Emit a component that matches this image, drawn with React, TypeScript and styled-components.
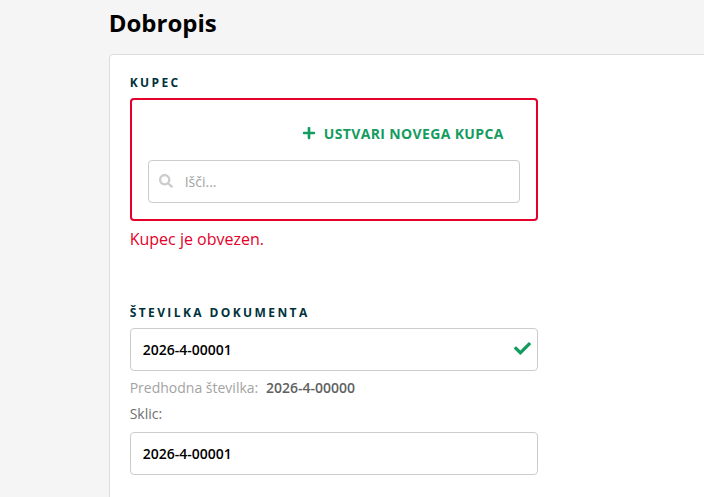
import styled, { createGlobalStyle } from "styled-components";
import { FaSearch, FaPlus, FaCheck } from "react-icons/fa";

const GlobalStyle = createGlobalStyle`
  html, body {
    margin: 0;
    height: 100%;
    overflow: hidden;
    background: #f5f5f5;
    font-family: "Open Sans", "Liberation Sans", sans-serif;
  }
  * { box-sizing: border-box; }
`;

const Page = styled.main`
  width: 100vw;
  height: 100vh;
  overflow: hidden;
  padding: 6px 0 0 108.7px;
`;

const Title = styled.h1`
  margin: 0 0 15px;
  height: 33px;
  font-size: 24px;
  line-height: 33px;
  font-weight: 700;
  color: #000;
`;

const Card = styled.section`
  width: 640px;
  min-height: 480px;
  padding: 20px;
  background: #fff;
  border: 1px solid #ddd;
  border-radius: 4px;
`;

const Field = styled.div`
  width: 408px;
`;

const SectionLabel = styled.label<{ $top?: number }>`
  display: block;
  margin: ${(p) => p.$top ?? 0}px 0 7px;
  font-size: 12px;
  line-height: 16px;
  font-weight: 700;
  letter-spacing: 2.4px;
  color: #00323c;
`;

const ErrorBox = styled.div`
  height: 123px;
  padding: 19px 16px 16px;
  border: 2px solid #e4002b;
  border-radius: 4px;
`;

const ActionRow = styled.div`
  display: flex;
  justify-content: flex-end;
  padding-right: 16px;
  margin-bottom: 13px;
`;

const LinkButton = styled.a`
  display: flex;
  align-items: center;
  gap: 8px;
  height: 28px;
  font-size: 14px;
  font-weight: 700;
  letter-spacing: 0.35px;
  color: #149c5f;
  svg { font-size: 14px; }
`;

const InputWrap = styled.div`
  position: relative;
`;

const Input = styled.input<{ $search?: boolean }>`
  display: block;
  width: 100%;
  height: 43px;
  padding: 0 12px 0 ${(p) => (p.$search ? 36 : 12)}px;
  border: 1px solid #ccc;
  border-radius: 4px;
  background: #fff;
  font-family: inherit;
  font-size: 14px;
  font-weight: ${(p) => (p.$search ? 400 : 600)};
  color: #000;
  outline: none;
  &::placeholder { color: #a3a3a3; opacity: 1; }
`;

const SearchIcon = styled(FaSearch)`
  position: absolute;
  left: 11px;
  top: 14px;
  font-size: 14px;
  color: #ccc;
`;

const CheckIcon = styled(FaCheck)`
  position: absolute;
  right: 7px;
  top: 12px;
  font-size: 17px;
  color: #149c5f;
`;

const ErrorText = styled.p`
  margin: 7px 0 0;
  font-size: 16px;
  line-height: 22px;
  color: #e4002b;
`;

const Hint = styled.p`
  margin: 7px 0 0;
  font-size: 14px;
  line-height: 19px;
  color: #a3a3a3;
  b {
    margin-left: 4px;
    font-weight: 600;
    color: #5f5f5f;
  }
`;

const SubLabel = styled.label`
  display: block;
  margin: 7px 0 9px;
  font-size: 14px;
  line-height: 19px;
  color: #6f6f6f;
`;

export default function App() {
  return (
    <Page>
      <GlobalStyle />
      <Title>Dobropis</Title>
      <Card>
        <Field>
          <SectionLabel>KUPEC</SectionLabel>
          <ErrorBox>
            <ActionRow>
              <LinkButton>
                <FaPlus />
                USTVARI NOVEGA KUPCA
              </LinkButton>
            </ActionRow>
            <InputWrap>
              <SearchIcon />
              <Input $search placeholder="Išči..." readOnly />
            </InputWrap>
          </ErrorBox>
          <ErrorText>Kupec je obvezen.</ErrorText>

          <SectionLabel $top={55}>ŠTEVILKA DOKUMENTA</SectionLabel>
          <InputWrap>
            <Input value="2026-4-00001" readOnly />
            <CheckIcon />
          </InputWrap>
          <Hint>
            Predhodna številka: <b>2026-4-00000</b>
          </Hint>
          <SubLabel>Sklic:</SubLabel>
          <Input value="2026-4-00001" readOnly />
        </Field>
      </Card>
    </Page>
  );
}
